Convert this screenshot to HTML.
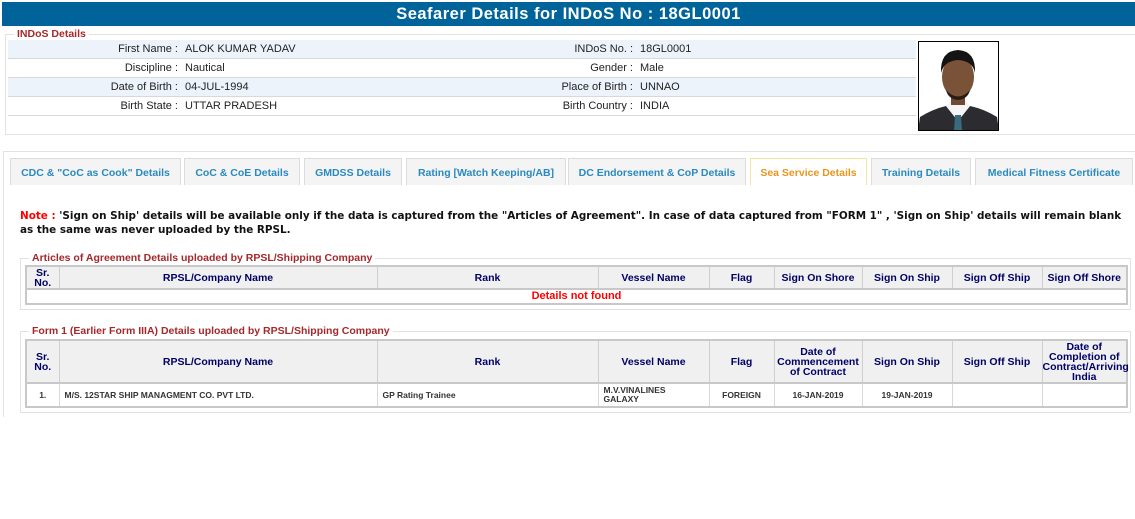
<!DOCTYPE html>
<html><head><meta charset="utf-8"><style>
*{margin:0;padding:0;box-sizing:border-box}
body{width:1135px;height:519px;background:#fff;font-family:"Liberation Sans",Arial,sans-serif;position:relative;overflow:hidden;font-size:11px;color:#222}
.a{position:absolute}
#hdr{left:2px;top:2px;width:1133px;height:24px;background:#00649a;color:#fff;font-weight:bold;font-size:16.5px;text-align:center;line-height:25px;letter-spacing:.5px}
.fs{position:absolute;border:1px solid #e2e2e2}
.lg{position:absolute;background:#fff;color:#a5282b;font-weight:bold;font-size:10.5px;padding:0 3px;line-height:12px}
.row{position:absolute;left:8px;width:908px;height:19px;border-bottom:1px solid #d8d8d8;line-height:18px}
.row.b{background:#edf3fb}
.row span{position:absolute}
.l1{right:738px;text-align:right}
.v1{left:177px}
.l2{right:283px;text-align:right}
.v2{left:632px}
.tab{position:absolute;top:158px;height:27px;background:#f4f4f4;border:1px solid #dcdcdc;border-bottom:none;color:#2a8ac0;font-weight:bold;font-size:10.5px;text-align:center;line-height:28px}
.tab.on{background:#fff;border-color:#f5e3a0;color:#e8961e}
table{position:absolute;border-collapse:collapse;table-layout:fixed;border:2px solid #c8c8c8}
th{background:#f0f0f0;color:#000066;font-weight:bold;font-size:10.5px;border:1px solid #cfcfcf;line-height:10px;border-bottom:2px solid #c8c8c8}
td{border:1px solid #d8d8d8;font-weight:bold;font-size:8.5px;color:#333;text-align:center;line-height:9px}
</style></head><body>
<div id="hdr" class="a">Seafarer Details for INDoS No : 18GL0001</div>

<div class="fs" style="left:5px;top:34px;width:1132px;height:101px"></div>
<div class="lg" style="left:14px;top:28px">INDoS Details</div>
<div class="row b" style="top:40px"><span class="l1">First Name :</span><span class="v1">ALOK KUMAR YADAV</span><span class="l2">INDoS No. :</span><span class="v2">18GL0001</span></div>
<div class="row" style="top:59px"><span class="l1">Discipline :</span><span class="v1">Nautical</span><span class="l2">Gender :</span><span class="v2">Male</span></div>
<div class="row b" style="top:78px"><span class="l1">Date of Birth :</span><span class="v1">04-JUL-1994</span><span class="l2">Place of Birth :</span><span class="v2">UNNAO</span></div>
<div class="row" style="top:97px"><span class="l1">Birth State :</span><span class="v1">UTTAR PRADESH</span><span class="l2">Birth Country :</span><span class="v2">INDIA</span></div>
<svg class="a" style="left:918px;top:41px" width="81" height="90" viewBox="0 0 81 90">
<rect width="81" height="90" fill="#fff"/>
<path d="M0 90 L2 76 Q15 68 28 65 L40 80 L52 65 Q66 68 79 76 L81 90Z" fill="#2b2b30"/>
<path d="M28 65 L40 80 L52 65 L48 60 L32 60Z" fill="#f4f4f4"/>
<path d="M37 74 L43 74 L44 90 L36 90Z" fill="#3a6a80"/>
<rect x="33" y="52" width="14" height="12" fill="#6e4a34"/>
<ellipse cx="40" cy="36" rx="16" ry="21" fill="#7a5238"/>
<path d="M23 32 Q22 10 40 9 Q58 10 57 32 Q55 20 40 19 Q26 20 23 32Z" fill="#141414"/>
<path d="M28 49 Q40 62 52 49 Q50 58 40 59 Q30 58 28 49Z" fill="#2a1c14"/>
<rect x="0" y="0" width="81" height="90" fill="none" stroke="#000" stroke-width="2"/>
</svg>

<div class="fs" style="left:3px;top:151px;width:1134px;height:266px;border-right:none;border-bottom:none"></div>
<div class="tab" style="left:10px;width:171px">CDC &amp; "CoC as Cook" Details</div>
<div class="tab" style="left:184px;width:116px">CoC &amp; CoE Details</div>
<div class="tab" style="left:304px;width:98px">GMDSS Details</div>
<div class="tab" style="left:406px;width:160px">Rating [Watch Keeping/AB]</div>
<div class="tab" style="left:568px;width:178px">DC Endorsement &amp; CoP Details</div>
<div class="tab on" style="left:750px;width:117px">Sea Service Details</div>
<div class="tab" style="left:871px;width:100px">Training Details</div>
<div class="tab" style="left:975px;width:158px">Medical Fitness Certificate</div>

<div class="a" style="left:20px;top:209px;font-family:'DejaVu Sans',Verdana,sans-serif;font-weight:bold;font-size:10.4px;line-height:14px;color:#111;white-space:nowrap"><span style="color:#f00">Note : </span>'Sign on Ship' details will be available only if the data is captured from the "Articles of Agreement". In case of data captured from "FORM 1" , 'Sign on Ship' details will remain blank<br>as the same was never uploaded by the RPSL.</div>

<div class="fs" style="left:20px;top:258px;width:1111px;height:52px"></div>
<div class="lg" style="left:29px;top:252px">Articles of Agreement Details uploaded by RPSL/Shipping Company</div>
<table style="left:25px;top:265px;width:1103px">
<colgroup><col style="width:33px"><col style="width:318px"><col style="width:221px"><col style="width:111px"><col style="width:65px"><col style="width:88px"><col style="width:90px"><col style="width:90px"><col></colgroup>
<tr style="height:23px"><th>Sr.<br>No.</th><th>RPSL/Company Name</th><th>Rank</th><th>Vessel Name</th><th>Flag</th><th>Sign On Shore</th><th>Sign On Ship</th><th>Sign Off Ship</th><th>Sign Off Shore</th></tr>
<tr style="height:15px"><td colspan="9" style="color:#f00;font-size:11px;line-height:13px">Details not found</td></tr>
</table>

<div class="fs" style="left:20px;top:331px;width:1111px;height:82px"></div>
<div class="lg" style="left:29px;top:325px">Form 1 (Earlier Form IIIA) Details uploaded by RPSL/Shipping Company</div>
<table style="left:25px;top:339px;width:1103px">
<colgroup><col style="width:33px"><col style="width:318px"><col style="width:221px"><col style="width:111px"><col style="width:65px"><col style="width:88px"><col style="width:90px"><col style="width:90px"><col></colgroup>
<tr style="height:43px"><th>Sr.<br>No.</th><th>RPSL/Company Name</th><th>Rank</th><th>Vessel Name</th><th>Flag</th><th>Date of<br>Commencement<br>of Contract</th><th>Sign On Ship</th><th>Sign Off Ship</th><th>Date of<br>Completion of<br>Contract/Arriving<br>India</th></tr>
<tr style="height:24px"><td>1.</td><td style="text-align:left;padding-left:5px">M/S. 12STAR SHIP MANAGMENT CO. PVT LTD.</td><td style="text-align:left;padding-left:5px">GP Rating Trainee</td><td style="text-align:left;padding-left:5px">M.V.VINALINES<br>GALAXY</td><td>FOREIGN</td><td>16-JAN-2019</td><td>19-JAN-2019</td><td></td><td></td></tr>
</table>
</body></html>
